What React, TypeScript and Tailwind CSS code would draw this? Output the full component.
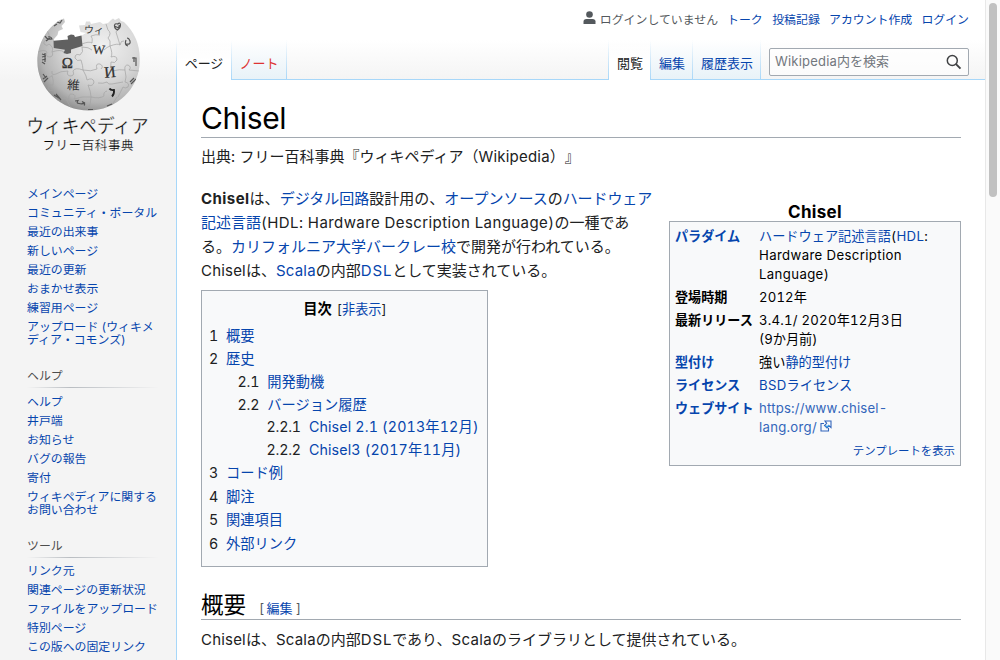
import React from "react";

const A = ({ children, className = "" }: { children: React.ReactNode; className?: string }) => (
  <a className={`text-[#0645ad] ${className}`}>{children}</a>
);

const Logo = () => (
  <svg width="176" height="160" viewBox="0 0 176 160" className="block">
    <defs>
      <radialGradient id="globe" cx="0.62" cy="0.32" r="0.72">
        <stop offset="0" stopColor="#f0f0f0" />
        <stop offset="0.45" stopColor="#dadada" />
        <stop offset="0.8" stopColor="#b3b3b3" />
        <stop offset="1" stopColor="#858585" />
      </radialGradient>
      <clipPath id="ball">
        <path d="M60 20 L64 18.500 L65 22 L61.500 26 L63 29 L58.500 31 L57.500 35 L54 39 V47 L65 49 L66 53 L71 52 L70.500 49 L82 46 L81 36 L86 33 L80.500 32 L79 25.500 L85 25 L86 21.500 L90 21.500 L91 24 L100 22 L103 24 L108 23 L111 20 L113 18.500 L115 20 L119 18 L121 21 L124 22 A51.200 51.200 0 0 1 139.700 61 A51.200 49.500 0 0 1 37.300 61 C37.500 43 47 28 60 20 Z" />
      </clipPath>
    </defs>
    <g clipPath="url(#ball)">
      <rect x="35" y="15" width="108" height="98" fill="url(#globe)" />
      <g fill="none" stroke="#a3a3a3" strokeWidth="0.7">
        <path d="M38 52 q6 -3 9 0 q-2 5 3 5 q4 -1 2 -5 q8 -3 12 0 M47 31 q4 5 1 9 q-5 0 -4 4 q3 3 5 0 q5 3 3 8" />
        <path d="M82 47 q2 5 -2 8 q-5 -2 -5 3 q2 4 6 2 q2 6 2 10 q-8 -3 -10 1 q2 5 -3 5 q-4 -1 -2 -5 q-8 0 -12 3 q-5 2 -4 -3" />
        <path d="M82 47 q7 0 10 3 M104 50 q3 -3 6 -4 q1 -6 -2 -8 q4 -5 0 -8 l-2 -6 M110 46 q3 8 1 11 q6 -2 6 3 q-2 4 -6 2 q-1 5 1 9 q8 -2 13 -1 q-1 -5 3 -5 q4 2 1 5 l10 1 M82 44 q7 -3 10 -1 q1 -5 -1 -7 q5 -2 9 -1" />
        <path d="M83 70 q8 2 14 -1 q-2 -6 3 -5 q4 2 1 5 M83 70 q4 7 4 10 q6 -3 7 2 q-1 5 -6 3 q3 7 3 12 q9 2 13 -1 q-1 -4 3 -5 M98 83 q5 1 9 -1 q1 3 5 2 l11 -2" />
        <path d="M52 75 q2 7 1 10 q-5 0 -5 4 q3 3 6 1 l4 12 M42 78 q5 2 10 -2 M56 101 q9 -4 13 -2 q-1 -5 3 -5 q5 1 2 5 q8 -3 17 -2 M91 97 q0 7 -3 12 M66 99 l5 9 M117 97 l-5 8 M125 70 q2 8 0 12 q5 1 3 5 q-3 2 -5 0 l-5 10 M110 46 q8 -3 10 -1 q1 -5 4 -4 M120 45 l-4 -13 q4 -4 2 -8" />
      </g>
      <g fill="none" stroke="#555" strokeWidth="1.200">
        <path d="M54 26 l3 -2 m0 -2 l3 1 l2 -3 M45 36 q2 4 7 3 q-1 -3 -4 -2 M46 41 l4 -3 M42 54 l3 1 m-3 2 l4 -1 m-4 4 l4 -1 m-1 -6 v9 m-3 0 l3 2 M43 74 l3 4 m-3 1 l4 -3 m-3 6 l4 -4 M54 95 l5 3 m-3 -4 l5 6 M114.500 26 q0 -3 3 -2 q3 -2 3 1 q0 3 -3 5 q-3 -1 -3 -4 l4 2 l1 -3 M126 44 q5 1 4 -3 q-1 -3 -3 -3 m-1 2 q-2 5 2 6 M134 57 v5 m-2 -4 h4 v8 M130 82 l4 -4 m-3 6 l5 -5 M75 101 l3 -0.500 q-2 3 1 3 q4 1 6 -1 m-3 -1 q4 2 2 4 M88 109.500 h5 M107 106 l5 -2" />
        <path d="M109.500 88.500 q1 2 4.500 1.500 q0.500 4 -2 6.500" strokeWidth="1.800" stroke="#222" />
      </g>
    </g>
    <path d="M53.500 40.700 L68 39.500 L67.500 36 L71 34.500 L74 35 L75 37 L81.500 35.500 L82.500 46 L71 49.500 L71 53 L67 54 L63.500 53 L65 49.800 L53.800 48 Z" fill="#606060" />
    <g fill="#333" fontFamily="'Liberation Serif','Noto Sans CJK JP',serif" textAnchor="middle">
      <text x="67.300" y="68" fontSize="15" stroke="#333" strokeWidth="0.3">Ω</text>
      <text x="99" y="54" fontSize="13" stroke="#333" strokeWidth="0.2" transform="rotate(4 99 50)">W</text>
      <text x="110" y="77.500" fontSize="16" stroke="#333" strokeWidth="0.2" transform="rotate(-6 110 73)">И</text>
      <text x="73.500" y="89.500" fontSize="12.500" transform="rotate(4 73 85)">維</text>
      <text x="94" y="33.500" fontSize="10" transform="rotate(3 94 30)">ウィ</text>
    </g>
    <g fill="#000" stroke="#f4f4f4" strokeWidth="0.35" fontFamily="'Noto Sans CJK JP',sans-serif">
      <text x="26.500" y="133" fontSize="19.500" textLength="122" lengthAdjust="spacingAndGlyphs">ウィキペディア</text>
      <text x="42.500" y="150" fontSize="12.500" strokeWidth="0.2" textLength="91">フリー百科事典</text>
    </g>
  </svg>
);

const SideList = ({ items }: { items: string[][] }) => (
  <ul className="text-[11.900px] leading-[13px]">
    {items.map((lines) => (
      <li key={lines[0]} className="whitespace-nowrap pb-[6px] text-[#0645ad]">
        {lines.map((l) => (
          <div key={l}>{l}</div>
        ))}
      </li>
    ))}
  </ul>
);

const SideHeading = ({ children, className }: { children: React.ReactNode; className: string }) => (
  <div>
    <h3 className="h-[18px] text-[11.900px] leading-[13px] text-[#4d4d4d]">{children}</h3>
    <div className={`h-px w-[132px] bg-linear-to-r from-[#c8ccd1]/0 via-[#b9bdc2] via-33% to-[#c8ccd1]/0 ${className}`} />
  </div>
);

const Divider = () => <div className="w-px bg-linear-to-b from-[#a7d7f9]/0 to-[#a7d7f9]" />;

const Tab = ({ children, active = false, className = "" }: { children: React.ReactNode; active?: boolean; className?: string }) => (
  <div
    className={`flex justify-center pt-[16px] text-[13px] leading-[15px] whitespace-nowrap ${
      active ? "bg-linear-to-b from-white/0 to-white to-50% text-[#202122]" : "border-b border-[#a7d7f9] bg-linear-to-b from-white to-[#e8f2f8] text-[#0645ad]"
    } ${className}`}
  >
    {children}
  </div>
);

const TocRow = ({ n, children, className = "" }: { n: string; children: React.ReactNode; className?: string }) => (
  <li className={`flex h-[23px] whitespace-nowrap ${className}`}>
    <span className="mr-[8px] tracking-[-0.200px]">{n}</span>
    <A>{children}</A>
  </li>
);

const InfoRow = ({ label, link = false, children }: { label: string; link?: boolean; children: React.ReactNode }) => (
  <div className="flex pb-[4px]">
    <div className={`w-[84px] shrink-0 text-[13.100px] font-bold whitespace-nowrap ${link ? "text-[#0645ad]" : "text-black"}`}>{label}</div>
    <div className="whitespace-nowrap">{children}</div>
  </div>
);

export default function App() {
  return (
    <div className="flex h-[660px] w-[1000px] overflow-hidden bg-white font-['Inter','Noto_Sans_CJK_JP',sans-serif] text-[#202122] tabular-nums [text-spacing-trim:space-all]">
      <div className="flex w-[985px] bg-[#f4f4f4] bg-[linear-gradient(#ffffff_40px,#f4f4f4_80px)] bg-[length:100%_80px] bg-no-repeat">
        <aside className="w-[176px] shrink-0">
          <Logo />
          <nav className="pt-[27px] pl-[27px]">
            <SideList
              items={[["メインページ"], ["コミュニティ・ポータル"], ["最近の出来事"], ["新しいページ"], ["最近の更新"], ["おまかせ表示"], ["練習用ページ"], ["アップロード (ウィキメ", "ディア・コモンズ)"]]}
            />
            <div className="h-[17px]" />
            <SideHeading className="mb-[7px]">ヘルプ</SideHeading>
            <SideList items={[["ヘルプ"], ["井戸端"], ["お知らせ"], ["バグの報告"], ["寄付"], ["ウィキペディアに関する", "お問い合わせ"]]} />
            <div className="h-[17px]" />
            <SideHeading className="mb-[6px]">ツール</SideHeading>
            <SideList items={[["リンク元"], ["関連ページの更新状況"], ["ファイルをアップロード"], ["特別ページ"], ["この版への固定リンク"]]} />
          </nav>
        </aside>
        <div className="mt-[40px] w-px shrink-0 bg-[linear-gradient(#a7d7f900,#a7d7f9_40px)]" />
        <div className="flex w-[808px] flex-col">
          <div className="flex h-[40px] items-start justify-end pt-[12px] pr-[16px] text-[11.900px] leading-[15px] whitespace-nowrap">
            <svg width="13" height="13" viewBox="0 0 13 13" className="mt-[-1px] mr-[4px] fill-[#54595d]">
              <circle cx="6.500" cy="3.500" r="3.300" />
              <path d="M0.500 13 V10.500 Q0.500 8 3.500 8 H9.500 Q12.500 8 12.500 10.500 V13 Z" />
            </svg>
            <span className="text-[#54595d]">ログインしていません</span>
            <A className="ml-[9px]">トーク</A>
            <A className="ml-[9.500px]">投稿記録</A>
            <A className="ml-[9.200px]">アカウント作成</A>
            <A className="ml-[9.200px]">ログイン</A>
          </div>
          <div className="flex h-[40px] shrink-0">
            <Tab active className="w-[54px]">ページ</Tab>
            <Divider />
            <Tab className="w-[54px] text-[#dd3333]!">ノート</Tab>
            <Divider />
            <div className="flex-1 border-b border-[#a7d7f9]" />
            <Divider />
            <Tab active className="w-[41px] pl-px">閲覧</Tab>
            <Divider />
            <Tab className="w-[41px] pl-px">編集</Tab>
            <Divider />
            <Tab className="w-[67px] pl-px">履歴表示</Tab>
            <Divider />
            <div className="flex w-[224px] border-b border-[#a7d7f9] pt-[8px] pl-[8px]">
              <div className="flex h-[28px] w-[200px] items-center justify-between rounded-[2px] border border-[#a2a9b1] bg-white/60 pr-[6px] pl-[5px] text-[13px] leading-[15px] text-[#72777d]">
                <span className="-mt-[2px]">
                  <span className="tracking-[0.200px]">Wikipedia</span>内を検索
                </span>
                <svg width="16" height="16" viewBox="0 0 16 16" fill="none" stroke="#404244" strokeWidth="1.500">
                  <circle cx="6.300" cy="6.500" r="5" />
                  <path d="M10 10.200 L14.500 14.700" strokeWidth="1.900" />
                </svg>
              </div>
            </div>
          </div>
          <main className="flex-1 bg-white pr-[24px] pl-[24px]">
            <h1 className="h-[58px] border-b border-[#a2a9b1] pt-[19px] text-[30px] leading-[38px] tracking-[-0.400px] text-black">Chisel</h1>
            <div className="pt-[7px] text-[15px] leading-[24px] whitespace-nowrap">
              出典:<span className="ml-[0.500px]"> フリー百科事典『ウィキペディア（</span><span className="tracking-[0.200px]">Wikipedia</span>）』
            </div>
            <div className="flex h-[417px] justify-between">
              <div className="pt-[18px]">
                <p className="text-[15px] leading-[24px] whitespace-nowrap">
                  <b className="tracking-[0.450px]">Chisel</b>は、<A>デジタル回路</A>設計用の、<A>オープンソース</A>の<A className="tracking-[-0.100px]">ハードウェア</A>
                  <br />
                  <A>記述言語</A>
                  <span className="tracking-[0.410px]">(HDL: Hardware Description Language)</span>の一種であ
                  <br />
                  る。<A>カリフォルニア大学バークレー校</A>で開発が行われている。
                  <br />
                  <span className="tracking-[0.200px]">Chisel</span>は、<A className="tracking-[0.200px]">Scala</A>の内部<A className="tracking-[0.800px]">DSL</A>として実装されている。
                </p>
                <div className="mt-[7px] h-[277px] w-[287px] border border-[#a2a9b1] bg-[#f8f9fa] pt-[6px] pl-[7px] text-[14.250px] leading-[23px]">
                  <div className="mb-[3px] pr-[6px] text-center">
                    <b className="text-black">目次</b>
                    <span className="ml-[5px] text-[13.200px]">
                      [<A>非表示</A>]
                    </span>
                  </div>
                  <ul>
                    <TocRow n="1">概要</TocRow>
                    <TocRow n="2">歴史</TocRow>
                    <TocRow n="2.1" className="-mt-[0.500px] pl-[28.500px]">開発動機</TocRow>
                    <TocRow n="2.2" className="pl-[28.500px]">バージョン履歴</TocRow>
                    <TocRow n="2.2.1" className="-mt-[0.500px] pl-[57.500px]">
                      <span className="tracking-[0.150px]">Chisel 2.1 (2013年12月)</span>
                    </TocRow>
                    <TocRow n="2.2.2" className="pl-[57.500px]">
                      <span className="tracking-[0.150px]">Chisel3 (2017年11月)</span>
                    </TocRow>
                    <TocRow n="3">コード例</TocRow>
                    <TocRow n="4" className="mt-px">脚注</TocRow>
                    <TocRow n="5">関連項目</TocRow>
                    <TocRow n="6" className="mt-[0.500px]">外部リンク</TocRow>
                  </ul>
                </div>
              </div>
              <div className="w-[292px] pt-[33px]">
                <div className="h-[19px] text-center text-[17px] leading-[20px] font-bold tracking-[0.300px] text-black">Chisel</div>
                <div className="h-[245px] border border-[#a2a9b1] bg-[#f8f9fa] pt-[5px] pr-[5px] pl-[5px] text-[13.200px] leading-[19px] text-black">
                  <InfoRow link label="パラダイム">
                    <A>ハードウェア記述言語</A>
                    <span className="tracking-[0.370px]">
                      (<A>HDL</A>:
                      <br />
                      Hardware Description
                      <br />
                      Language)
                    </span>
                  </InfoRow>
                  <InfoRow label="登場時期">
                    <span className="tracking-[0.150px]">2012年</span>
                  </InfoRow>
                  <InfoRow label="最新リリース">
                    <span className="tracking-[0.220px]">3.4.1/ 2020年12月3日</span>
                    <br />
                    (9か月前)
                  </InfoRow>
                  <InfoRow link label="型付け">
                    強い<A>静的型付け</A>
                  </InfoRow>
                  <InfoRow link label="ライセンス">
                    <A><span className="tracking-[0.300px]">BSD</span>ライセンス</A>
                  </InfoRow>
                  <InfoRow link label="ウェブサイト">
                    <span className="tracking-[0.180px] text-[#3366bb]">
                      https://www.chisel-
                      <br />
                      <span className="tracking-[0.270px]">lang.org/</span>
                      <svg width="12" height="12" viewBox="0 0 12 12" fill="none" stroke="#3366bb" strokeWidth="1.100" className="ml-[3px] inline-block align-[0px]">
                        <path d="M4 3.500 H1 V11 H8.500 V8" />
                        <path d="M5 1 H11 V7.500 L9 5.800 L7 8 L4.500 5.500 L6.700 3.300 Z" fill="#f8f9fa" />
                        <path d="M5.500 5.500 L7 7 L9 5" stroke="#3aa0e8" />
                      </svg>
                    </span>
                  </InfoRow>
                  <div className="pt-[1px] text-right text-[11.400px]">
                    <A>テンプレートを表示</A>
                  </div>
                </div>
              </div>
            </div>
            <h2 className="flex h-[34px] items-baseline border-b border-[#a2a9b1] text-[22.500px] leading-[38px] whitespace-nowrap text-black">
              概要
              <span className="ml-[13px] text-[13px] text-[#54595d]">
                [ <A className="-ml-[1px]">編集</A> ]
              </span>
            </h2>
            <p className="pt-[8px] text-[15px] leading-[24px] whitespace-nowrap">
              <span className="tracking-[0.200px]">Chisel</span>は、<span className="tracking-[0.200px]">Scala</span>の内部<span className="tracking-[0.800px]">DSL</span>であり、
              <span className="tracking-[0.350px]">Scala</span>のライブラリとして提供されている。
            </p>
          </main>
        </div>
      </div>
      <div className="w-[15px] border-l border-[#e8e8e8] bg-[#fafafa] pt-[3px] pl-[3px]">
        <div className="h-[194px] w-[8px] rounded-full bg-[#c1c1c1]" />
      </div>
    </div>
  );
}
